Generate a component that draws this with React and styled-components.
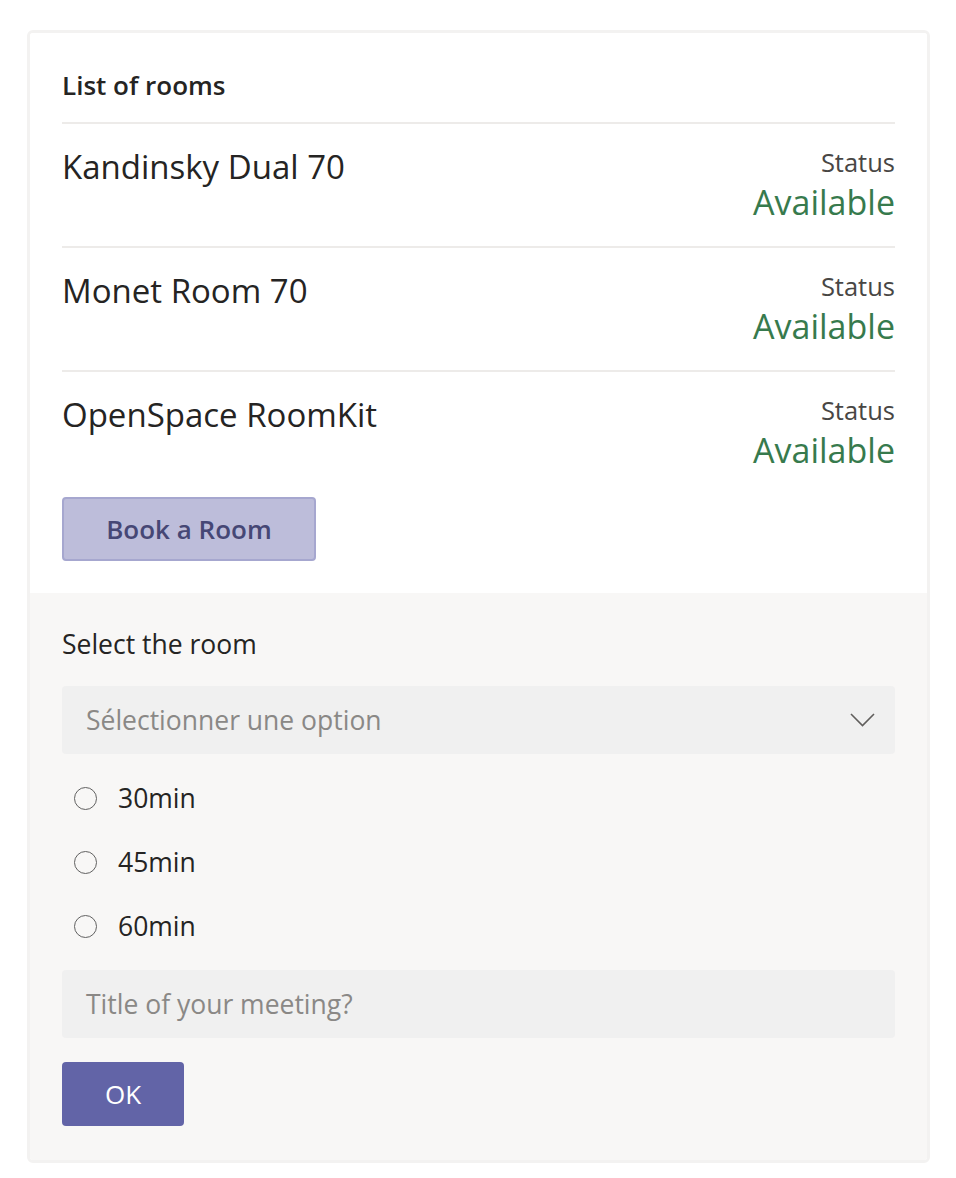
import React from "react";
import styled, { createGlobalStyle } from "styled-components";

const Global = createGlobalStyle`
  html, body { margin: 0; padding: 0; background: #ffffff; }
  body { font-family: "Open Sans", "Noto Sans", sans-serif; color: #252423; }
`;

const Page = styled.div`
  padding: 30px 0 16px 27px;
`;

const Card = styled.div`
  width: 903px;
  box-sizing: border-box;
  border: 3px solid #f3f2f1;
  border-radius: 6px;
  overflow: hidden;
`;

const TopSection = styled.section`
  background: #ffffff;
  padding: 36px 32px 32px;
`;

const Title = styled.div`
  font-size: 26px;
  font-weight: 600;
  line-height: 32px;
  margin-bottom: 21px;
  color: #252423;
`;

const Row = styled.div`
  display: flex;
  justify-content: space-between;
  align-items: flex-start;
  border-top: 2px solid #edebe9;
  padding: 22px 0 20px;
`;

const RoomName = styled.div`
  font-size: 33px;
  line-height: 42px;
  color: #252423;
`;

const StatusCol = styled.div`
  display: flex;
  flex-direction: column;
  align-items: flex-end;
`;

const StatusLabel = styled.div`
  font-size: 25.5px;
  line-height: 32px;
  color: #484644;
`;

const StatusValue = styled.div`
  font-size: 34px;
  line-height: 48px;
  color: #377a4d;
`;

const BookButton = styled.button`
  margin-top: 3px;
  width: 254px;
  height: 64px;
  box-sizing: border-box;
  background: #bdbdda;
  border: 2px solid #a6a7cf;
  border-radius: 4px;
  font-family: inherit;
  font-size: 26px;
  font-weight: 600;
  color: #464775;
  cursor: pointer;
`;

const FormSection = styled.section`
  background: #f8f7f6;
  padding: 33px 32px 34px;
  display: flex;
  flex-direction: column;
  gap: 24px;
`;

const Label = styled.div`
  font-size: 26.5px;
  line-height: 36px;
  color: #252423;
`;

const Field = styled.div`
  height: 68px;
  box-sizing: border-box;
  background: #f0f0f0;
  border-radius: 4px;
  padding: 0 20px 0 24px;
  display: flex;
  align-items: center;
  justify-content: space-between;
  font-size: 26.5px;
  color: #8a8886;
`;

const RadioItem = styled.label`
  display: flex;
  align-items: center;
  height: 40px;
  padding-left: 12px;
  gap: 21px;
  font-size: 26.5px;
  color: #252423;
`;

const RadioCircle = styled.span`
  width: 23px;
  height: 23px;
  box-sizing: border-box;
  border: 1.5px solid #616161;
  border-radius: 50%;
  flex: none;
`;

const OkButton = styled.button`
  width: 122px;
  height: 64px;
  border: none;
  border-radius: 4px;
  background: #6264a7;
  color: #ffffff;
  font-family: inherit;
  font-size: 26px;
  cursor: pointer;
`;

const rooms = ["Kandinsky Dual 70", "Monet Room 70", "OpenSpace RoomKit"];
const durations = ["30min", "45min", "60min"];

export default function App() {
  return (
    <Page>
      <Global />
      <Card>
        <TopSection>
          <Title>List of rooms</Title>
          {rooms.map((r) => (
            <Row key={r}>
              <RoomName>{r}</RoomName>
              <StatusCol>
                <StatusLabel>Status</StatusLabel>
                <StatusValue>Available</StatusValue>
              </StatusCol>
            </Row>
          ))}
          <BookButton>Book a Room</BookButton>
        </TopSection>
        <FormSection>
          <Label>Select the room</Label>
          <Field>
            <span>Sélectionner une option</span>
            <svg width="25" height="14" viewBox="0 0 25 14" fill="none">
              <polyline points="1,1 12.5,12.5 24,1" stroke="#605e5c" strokeWidth="1.6" />
            </svg>
          </Field>
          {durations.map((d) => (
            <RadioItem key={d}>
              <RadioCircle />
              {d}
            </RadioItem>
          ))}
          <Field>Title of your meeting?</Field>
          <div>
            <OkButton>OK</OkButton>
          </div>
        </FormSection>
      </Card>
    </Page>
  );
}
